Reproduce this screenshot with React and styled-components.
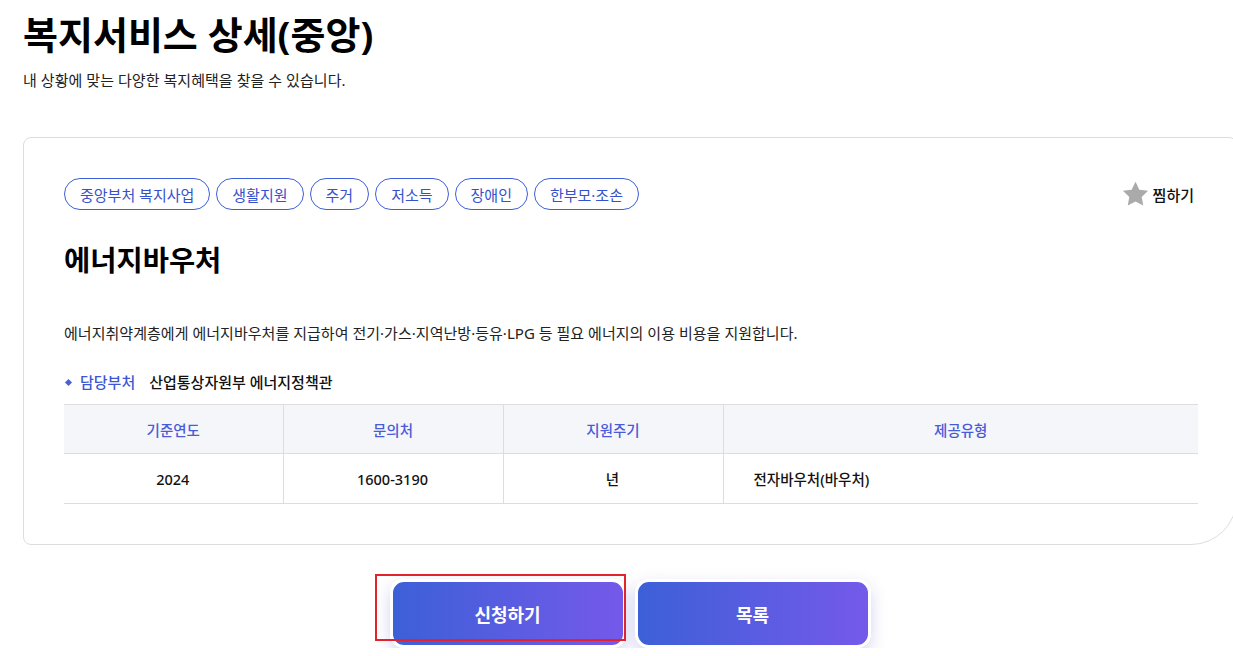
import React from "react";
import styled, { createGlobalStyle } from "styled-components";

const Global = createGlobalStyle`
  html, body { margin: 0; padding: 0; background: #fff; overflow: hidden; }
  body { font-family: "Noto Sans", "Noto Sans CJK KR", sans-serif; color: #111; }
  * { box-sizing: border-box; }
`;

const Page = styled.div`
  width: 1237px;
  padding: 0 0 0 23px;
`;

const Title = styled.h1`
  margin: 0;
  padding-top: 8px;
  font-size: 38px;
  font-weight: 700;
  line-height: 52px;
  color: #000;
`;

const Sub = styled.p`
  margin: 8px 0 0;
  font-size: 15px;
  line-height: 24px;
  letter-spacing: 0.05px;
  color: #222;
`;

const Card = styled.section`
  margin-top: 45px;
  width: 1214px;
  border: 1px solid #ddd;
  border-radius: 8px 8px 46px 8px;
  padding: 40px 40px 40px;
`;

const TopRow = styled.div`
  display: flex;
  align-items: center;
  justify-content: space-between;
`;

const Tags = styled.div`
  display: flex;
  gap: 6px;
`;

const Tag = styled.span`
  display: inline-flex;
  align-items: center;
  height: 32px;
  padding: 0 15px;
  border: 1px solid #3d5fd9;
  border-radius: 16px;
  font-size: 15px;
  color: #3552cc;
  white-space: nowrap;
`;

const Fav = styled.button`
  display: flex;
  align-items: center;
  gap: 4px;
  border: 0;
  background: none;
  padding: 0;
  margin-right: 2px;
  font-family: inherit;
  font-size: 15px;
  font-weight: 500;
  color: #111;
  cursor: pointer;
`;

const Heading = styled.h2`
  margin: 30px 0 0;
  font-size: 28.5px;
  font-weight: 700;
  line-height: 40px;
  color: #000;
`;

const Desc = styled.p`
  margin: 41px 0 0;
  font-size: 15px;
  line-height: 24px;
  letter-spacing: 0.03px;
  color: #222;
`;

const Dept = styled.div`
  margin-top: 25px;
  display: flex;
  align-items: center;
  font-size: 15px;
  line-height: 24px;
`;

const Bullet = styled.span`
  width: 5px;
  height: 5px;
  margin: 0 9px 0 2px;
  background: #4a5fd8;
  transform: rotate(45deg);
`;

const DeptLabel = styled.span`
  color: #3d57d4;
  font-weight: 500;
  margin-right: 14px;
`;

const DeptValue = styled.span`
  color: #111;
  font-weight: 500;
`;

const Table = styled.table`
  margin-top: 10px;
  width: 1134px;
  border-collapse: collapse;
  table-layout: fixed;
  border-top: 1px solid #ddd;
  font-size: 14.5px;
`;

const Th = styled.th`
  height: 49px;
  background: #f5f6fa;
  color: #4a5bd9;
  font-weight: 500;
  text-align: center;
  border-bottom: 1px solid #ddd;
  & + & { border-left: 1px solid #ddd; }
`;

const Td = styled.td`
  height: 50px;
  color: #111;
  font-weight: 500;
  text-align: ${(p) => (p.$left ? "left" : "center")};
  padding-left: ${(p) => (p.$left ? "30px" : "0")};
  border-bottom: 1px solid #ddd;
  & + & { border-left: 1px solid #ddd; }
`;

const Buttons = styled.div`
  width: 1214px;
  margin-top: 34px;
  display: flex;
  justify-content: center;
  gap: 9px;
`;

const BtnWrap = styled.div`
  position: relative;
`;

const Btn = styled.button`
  width: 236px;
  height: 69px;
  border: 3px solid #fff;
  border-radius: 14px;
  background: linear-gradient(90deg, #3c60d7 0%, #7559ea 100%);
  box-shadow: 0 6px 16px rgba(90, 90, 200, 0.25);
  color: #fff;
  font-family: inherit;
  font-size: 18px;
  font-weight: 700;
  cursor: pointer;
`;

const Highlight = styled.div`
  position: absolute;
  left: -15px;
  top: -5px;
  width: 251px;
  height: 67px;
  border: 2px solid #e3232b;
  pointer-events: none;
`;

const Star = () => (
  <svg width="27" height="26" viewBox="0 0 24 23" aria-hidden="true">
    <path
      d="M12 0.6l3.4 7.1 7.8 1-5.7 5.4 1.4 7.7L12 18.1l-6.9 3.7 1.4-7.7L0.8 8.7l7.8-1z"
      fill="#aaa"
    />
  </svg>
);

const tags = ["중앙부처 복지사업", "생활지원", "주거", "저소득", "장애인", "한부모·조손"];

export default function App() {
  return (
    <>
      <Global />
      <Page>
        <Title>복지서비스 상세(중앙)</Title>
        <Sub>내 상황에 맞는 다양한 복지혜택을 찾을 수 있습니다.</Sub>
        <Card>
          <TopRow>
            <Tags>
              {tags.map((t) => (
                <Tag key={t}>{t}</Tag>
              ))}
            </Tags>
            <Fav>
              <Star />
              찜하기
            </Fav>
          </TopRow>
          <Heading>에너지바우처</Heading>
          <Desc>
            에너지취약계층에게 에너지바우처를 지급하여 전기·가스·지역난방·등유·LPG 등 필요 에너지의 이용 비용을 지원합니다.
          </Desc>
          <Dept>
            <Bullet />
            <DeptLabel>담당부처</DeptLabel>
            <DeptValue>산업통상자원부 에너지정책관</DeptValue>
          </Dept>
          <Table>
            <colgroup>
              <col style={{ width: 219 }} />
              <col style={{ width: 220 }} />
              <col style={{ width: 220 }} />
              <col />
            </colgroup>
            <thead>
              <tr>
                <Th>기준연도</Th>
                <Th>문의처</Th>
                <Th>지원주기</Th>
                <Th>제공유형</Th>
              </tr>
            </thead>
            <tbody>
              <tr>
                <Td>2024</Td>
                <Td>1600-3190</Td>
                <Td>년</Td>
                <Td $left>전자바우처(바우처)</Td>
              </tr>
            </tbody>
          </Table>
        </Card>
        <Buttons>
          <BtnWrap>
            <Btn>신청하기</Btn>
            <Highlight />
          </BtnWrap>
          <BtnWrap>
            <Btn>목록</Btn>
          </BtnWrap>
        </Buttons>
      </Page>
    </>
  );
}
